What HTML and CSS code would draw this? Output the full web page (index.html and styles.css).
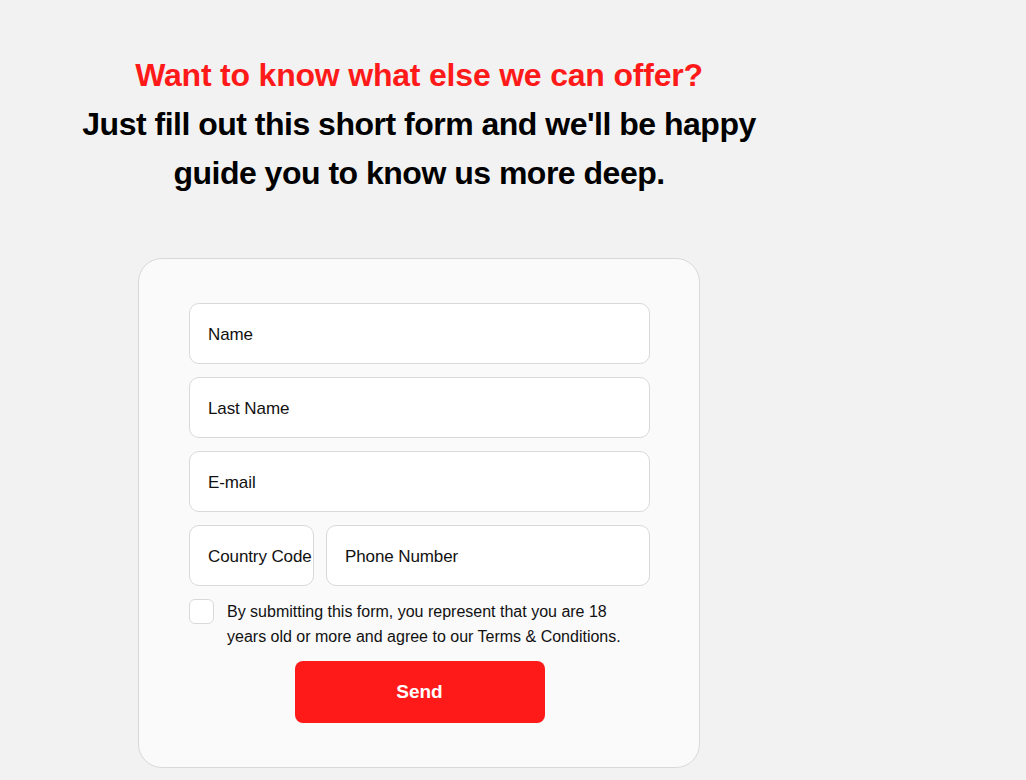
FILE: index.html
```html
<!doctype html>
<html lang="en">
<head>
  <meta charset="UTF-8" />
  <meta name="viewport" content="width=device-width, initial-scale=1.0" />
  <title>Contact Form</title>
  <link rel="stylesheet" href="styles.css">
</head>
<body>
  <div class="container">
    <header class="intro">
      <h2 class="intro-accent">Want to know what else we can offer?</h2>
      <h1 class="intro-title">Just fill out this short form and we'll be happy guide you to know us more deep.</h1>
    </header>

    <form class="form-card">
      <input class="field" type="text" placeholder="Name">
      <input class="field" type="text" placeholder="Last Name">
      <input class="field" type="email" placeholder="E-mail">

      <div class="phone-row">
        <input class="field field-code" type="text" placeholder="Country Code">
        <input class="field" type="tel" placeholder="Phone Number">
      </div>

      <label class="terms">
        <input type="checkbox" class="terms-check">
        <span>By submitting this form, you represent that you are 18 years old or more and agree to our Terms &amp; Conditions.</span>
      </label>

      <button type="submit" class="send-btn">Send</button>
    </form>
  </div>
</body>
</html>
```

FILE: styles.css
```css
:root {
  --background-color: #f2f2f2;
  --card-color: #fafafa;
  --border-color: #d9d9d9;
  --accent-color: #ff1a1a;
  --text-color: #000;
}

body {
  margin: 0;
  padding: 0;
  background-color: var(--background-color);
  color: var(--text-color);
  font-family: 'Liberation Sans', Arial, sans-serif;
}

.container {
  width: 838px;
  display: flex;
  flex-direction: column;
  align-items: center;
  padding-top: 51px;
}

.intro {
  text-align: center;
  width: 720px;
}

.intro-accent,
.intro-title {
  margin: 0;
  font-size: 32px;
  line-height: 49px;
}

.intro-accent {
  color: var(--accent-color);
  font-weight: 700;
  letter-spacing: -0.2px;
}

.intro-title {
  font-weight: 700;
  letter-spacing: -0.5px;
}

.form-card {
  box-sizing: border-box;
  width: 562px;
  margin-top: 60px;
  padding: 44px 49px 44px 50px;
  background-color: var(--card-color);
  border: 1px solid var(--border-color);
  border-radius: 24px;
  display: flex;
  flex-direction: column;
  gap: 13px;
}

.field {
  box-sizing: border-box;
  width: 100%;
  height: 61px;
  padding: 3px 18px 0;
  background-color: #fff;
  border: 1px solid var(--border-color);
  border-radius: 10px;
  font-family: inherit;
  font-size: 17px;
  letter-spacing: -0.1px;
  color: var(--text-color);
}

.field::placeholder {
  color: #111;
}

.phone-row {
  display: flex;
  gap: 12px;
}

.field-code {
  width: 125px;
  padding-right: 0;
  flex-shrink: 0;
}

.terms {
  display: flex;
  align-items: flex-start;
  gap: 13px;
  padding-right: 20px;
  font-size: 16px;
  line-height: 25px;
  color: #111;
}

.terms-check {
  appearance: none;
  margin: 0;
  flex-shrink: 0;
  width: 25px;
  height: 25px;
  background-color: #fff;
  border: 1px solid var(--border-color);
  border-radius: 6px;
}

.send-btn {
  align-self: center;
  width: 250px;
  height: 62px;
  margin-top: -1px;
  background-color: var(--accent-color);
  color: #fff;
  border: none;
  border-radius: 8px;
  font-family: inherit;
  font-size: 19px;
  font-weight: 700;
  cursor: pointer;
}
```
